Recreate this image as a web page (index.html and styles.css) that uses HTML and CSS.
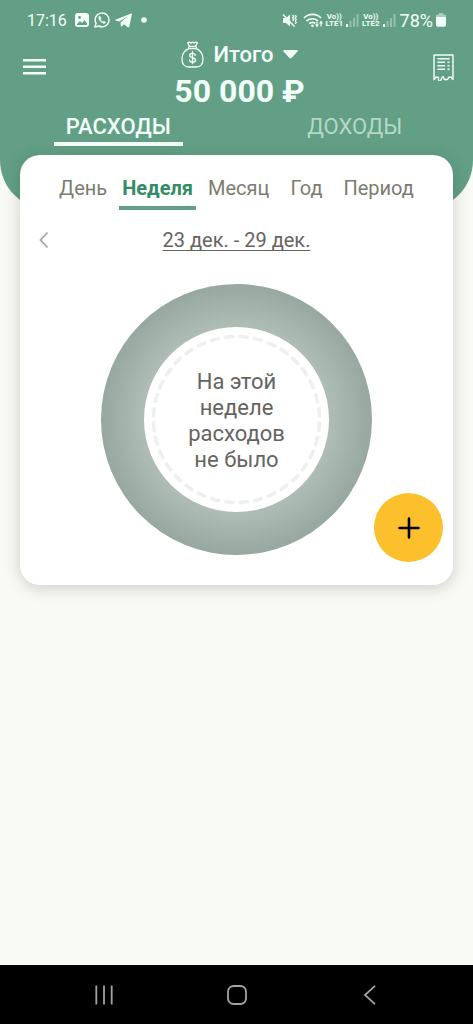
FILE: index.html
```html
<!DOCTYPE html>
<html lang="ru">
<head>
<meta charset="utf-8">
<meta name="viewport" content="width=device-width, initial-scale=1">
<title>Расходы</title>
<link rel="stylesheet" href="styles.css">
</head>
<body>
<header class="hero">
  <div class="status">
    <div class="status-left">
      <span class="clock">17:16</span>
      <svg width="14" height="14" viewBox="0 0 14 14"><rect width="14" height="14" rx="3" fill="currentColor"/><circle cx="4.500" cy="4.500" r="1.400" fill="#629f85"/><path d="M2 11l3-3 2 2 2.500-3L12 10.500V12H2z" fill="#629f85"/></svg>
      <svg width="16" height="16" viewBox="0 0 16 16" fill="none" stroke="currentColor"><path d="M1 15l1-3.800A6.900 6.900 0 1 1 4.800 14z" stroke-width="1.500" stroke-linejoin="round"/><path d="M5.200 4.200c-1.600 1.600.3 4.300 2 5.800 1.600 1.400 3.600 2.100 4.600.6l-1.900-1.500-1 .9C7.700 9.500 6.800 8.500 6.300 7.500l.8-1-.8-2.100z" fill="currentColor" stroke-width=".4"/></svg>
      <svg width="17" height="15" viewBox="0 0 17 15" fill="currentColor"><path d="M.4 6.800L16 .5c.6-.2 1 .1.900.8l-2.600 12.300c-.2.9-.8 1-1.500.6L9 11.300l-2 2c-.6.500-1 .4-1.100-.4l-.3-3.300L12.700 3.300 4.300 8.500.5 7.600c-.6-.2-.6-.6-.1-.8z"/></svg>
      <svg class="dot" width="6" height="6" viewBox="0 0 6 6"><circle cx="3" cy="3" r="2.800" fill="currentColor"/></svg>
    </div>
    <div class="status-right">
      <svg width="15" height="15" viewBox="0 0 15 15" fill="none" stroke="currentColor"><path d="M1 5h3l4-3.500v12L4 10H1z" fill="currentColor" stroke="none"/><path d="M1 1.500l11.500 12" stroke-width="1.500"/><path d="M10.500 2l1.200 1.500-1.200 1.500 1.200 1.500-1 1.500M13.200 2l1 1.500-1 1.500 1 1.500-1 1.500 1 1.500-1 1.500" stroke-width="1.300"/></svg>
      <svg class="wifi" width="20" height="15" viewBox="0 0 20 15" fill="none" stroke="currentColor" stroke-width="1.700"><path d="M1 5a12 12 0 0 1 17 0M3.500 8a8.500 8.500 0 0 1 11.500 0M6.200 10.700a5 5 0 0 1 6-.5"/><circle cx="9.500" cy="12.800" r="1.300" fill="currentColor" stroke="none"/><path d="M14 8.500v4M18 13.500v-4" stroke-width="1.200"/><path d="M12 11.500h4l-2 3zM16 10.500h4l-2-3z" fill="currentColor" stroke="none"/></svg>
      <span class="lte"><span>Vo))</span><span>LTE1</span></span>
      <svg class="bars" width="13" height="13" viewBox="0 0 13 13" fill="currentColor"><path d="M0 10h2v3H0z"/><path d="M3.500 7h2v6h-2zM7 4h2v9H7zM10.500 0h2v13h-2z" opacity=".35"/></svg>
      <span class="lte"><span>Vo))</span><span>LTE2</span></span>
      <svg class="bars" width="13" height="13" viewBox="0 0 13 13" fill="currentColor"><path d="M0 10h2v3H0z"/><path d="M3.500 7h2v6h-2zM7 4h2v9H7zM10.500 0h2v13h-2z" opacity=".35"/></svg>
      <span class="battery">78%</span>
      <svg width="10" height="14" viewBox="0 0 10 14" fill="currentColor"><path d="M3 0h4v1.500h1.500A1.500 1.500 0 0 1 10 3v3H0V3a1.500 1.500 0 0 1 1.500-1.500H3z" opacity=".5"/><path d="M0 4h10v8a1.800 1.800 0 0 1-1.800 1.800H1.800A1.800 1.800 0 0 1 0 12z"/></svg>
    </div>
  </div>

  <div class="topbar">
    <button class="icon-button" type="button" aria-label="Меню">
      <svg width="23" height="16" viewBox="0 0 23 16" fill="currentColor"><path d="M0 0h23v2.400H0zM0 6.600h23V9H0zM0 13h23v2.400H0z"/></svg>
    </button>
    <div class="account">
      <button class="account-name" type="button">
        <svg width="23" height="27" viewBox="0 0 23 27" fill="none" stroke="currentColor" stroke-width="1.300" stroke-linecap="round" stroke-linejoin="round"><path d="M8.300 7.300C4 9 1 13 1 18c0 5 2.500 8 7 8h7c4.500 0 7-3 7-8 0-5-3-9-7.300-10.700"/><path d="M8.500 5.300L6.700 2c1.500-1.500 2.500-.8 3.300.2C10.800.8 12.300.8 13 2.200c.8-1 2-1.700 3.400-.2l-1.900 3.300"/><rect x="7.500" y="5.300" width="8" height="2.200" rx="1.100"/><path d="M14.300 14.300c-.2-1.400-1.200-2-2.800-2-1.700 0-2.800.8-2.800 2.200 0 3 5.800 1.500 5.800 4.500 0 1.500-1.200 2.200-3 2.200-1.700 0-2.900-.8-3-2.200M11.500 10.700v12"/></svg>
        <span>Итого</span>
        <svg width="15" height="9" viewBox="0 0 15 9" fill="currentColor"><path d="M1.200 0h12.600q1.500.2.700 1.400L8.500 8q-1 .9-2 0L.5 1.400Q-.3.200 1.200 0z"/></svg>
      </button>
      <div class="balance">50 000 ₽</div>
    </div>
    <button class="icon-button" type="button" aria-label="Список операций">
      <svg width="21" height="27" viewBox="0 0 21 27" fill="none" stroke="currentColor" stroke-width="1.400"><path d="M1 1h19v24.500q-1.600-.5-1.600-2.200h-2.600q-.7 2.400-2.800 2.400T10.500 23.300 8 25.700t-2.800-2.400H2.600Q2.600 25 1 25.500z" stroke-linejoin="round"/><path d="M4.500 4.700h12M4.500 8.200h7.500M14.500 8.200h2M4.500 11.700h7.500M14.500 11.700h2M4.500 15.200h7.500M14.500 15.200h2"/></svg>
    </button>
  </div>

  <nav class="kinds" aria-label="Тип операций">
    <a class="kind kind-active" href="#expenses" aria-current="page">РАСХОДЫ</a>
    <a class="kind" href="#income">ДОХОДЫ</a>
  </nav>
</header>

<main class="content">
  <section class="card">
    <nav class="periods" aria-label="Период">
      <a class="period" href="#day">День</a>
      <a class="period period-active" href="#week" aria-current="true">Неделя</a>
      <a class="period" href="#month">Месяц</a>
      <a class="period period-short" href="#year">Год</a>
      <a class="period" href="#range">Период</a>
    </nav>
    <div class="dates">
      <button class="prev" type="button" aria-label="Предыдущая неделя">
        <svg width="10" height="18" viewBox="0 0 10 18" fill="none" stroke="currentColor" stroke-width="1.700"><path d="M8.500 1.500L1.500 9l7 7.500"/></svg>
      </button>
      <a class="date-range" href="#range">23 дек. - 29 дек.</a>
    </div>
    <div class="donut">
      <svg class="ring" viewBox="0 0 271 271">
        <defs>
          <radialGradient id="ring-fill"><stop offset=".65" stop-color="#b1bfb7"/><stop offset="1" stop-color="#97a8a1"/></radialGradient>
        </defs>
        <circle cx="135.500" cy="135.500" r="135.500" fill="url(#ring-fill)"/>
        <circle cx="135.500" cy="135.500" r="92.500" fill="#fff"/>
        <circle cx="135.500" cy="135.500" r="83" fill="none" stroke="#edf0ef" stroke-width="3.500" pathLength="360" stroke-dasharray="7 3" stroke-dashoffset="-1.500"/>
      </svg>
      <p class="empty">На этой<br>неделе<br>расходов<br>не было</p>
    </div>
    <button class="add" type="button" aria-label="Добавить">
      <svg width="22" height="22" viewBox="0 0 22 22" stroke="currentColor" stroke-width="2.600" stroke-linecap="round"><path d="M11 1.500v19M1.500 11h19"/></svg>
    </button>
  </section>
</main>

<footer class="system-nav">
  <button class="system-button" type="button" aria-label="Недавние">
    <svg width="20" height="20" viewBox="0 0 20 20" stroke="currentColor" stroke-width="1.800"><path d="M2.300 .5v19M10 .5v19M17.700 .5v19"/></svg>
  </button>
  <button class="system-button" type="button" aria-label="Домой">
    <svg width="20" height="20" viewBox="0 0 20 20" fill="none" stroke="currentColor" stroke-width="1.800"><rect x="1" y="1" width="18" height="18" rx="5.500"/></svg>
  </button>
  <button class="system-button" type="button" aria-label="Назад">
    <svg width="20" height="20" viewBox="0 0 20 20" fill="none" stroke="currentColor" stroke-width="1.800"><path d="M15 .8L5 10l10 9.200"/></svg>
  </button>
</footer>
</body>
</html>
```

FILE: styles.css
```css
* {
  box-sizing: border-box;
}

body {
  margin: 0;
  min-height: 100vh;
  display: flex;
  flex-direction: column;
  background: #f9faf4;
  color: #66645f;
  font-family: Roboto, "Noto Sans", sans-serif;
}

button {
  margin: 0;
  padding: 0;
  border: 0;
  background: none;
  color: inherit;
  font: inherit;
  cursor: pointer;
}

a {
  color: inherit;
  text-decoration: none;
}

svg {
  display: block;
  flex: none;
}

.hero {
  padding-bottom: 64px;
  border-radius: 0 0 50px 50px;
  background: #629f85;
  color: #f3fff9;
}

.status {
  display: flex;
  justify-content: space-between;
  height: 40px;
  padding: 0 27px;
}

.status-left,
.status-right {
  display: flex;
  align-items: center;
}

.status-left {
  gap: 5px;
}

.status-right {
  gap: 3px;
}

.clock {
  margin-right: 3px;
  font-size: 16px;
}

.dot {
  margin-left: 4px;
}

.wifi {
  margin-left: 3px;
}

.lte {
  display: flex;
  flex-direction: column;
  align-items: center;
  font-size: 8px;
  font-weight: 700;
  line-height: 7px;
}

.battery {
  margin-left: 1px;
  font-size: 18px;
}

.topbar {
  display: flex;
  justify-content: space-between;
  padding: 0 19px 0 23px;
}

.icon-button {
  display: flex;
  align-items: center;
  height: 54px;
}

.account {
  display: flex;
  flex-direction: column;
  align-items: center;
}

.account-name {
  display: flex;
  align-items: center;
  gap: 9px;
  height: 28px;
  font-size: 22px;
  font-weight: 500;
}

.balance {
  font-size: 32px;
  font-weight: 700;
  line-height: 46px;
}

.kinds {
  display: grid;
  grid-template-columns: 1fr 1fr;
  justify-items: center;
}

.kind {
  height: 32px;
  padding: 0 12px;
  border-bottom: 4px solid transparent;
  color: #b3d9c4;
  font-size: 22px;
  line-height: 26px;
}

.kind-active {
  border-color: #f3fff9;
  color: #f3fff9;
  font-weight: 500;
}

.content {
  flex: 1;
  margin-top: -55px;
  padding: 0 20px;
}

.card {
  position: relative;
  padding-bottom: 30px;
  border-radius: 20px;
  background: #fff;
  box-shadow: 0 3px 16px rgba(40, 50, 40, 0.22);
}

.periods {
  display: flex;
  justify-content: center;
  gap: 9px;
  padding-top: 18px;
  color: #7d7b6f;
  font-size: 20px;
  line-height: 30px;
}

.period {
  height: 37px;
  padding: 0 3px;
  border-bottom: 4px solid transparent;
}

.period-active {
  border-color: #629f85;
  color: #348b67;
  font-weight: 700;
}

.period-short {
  margin: 0 6px;
}

.dates {
  display: grid;
  grid-template-columns: 30px 1fr 30px;
  align-items: center;
  justify-items: center;
  height: 60px;
  padding: 0 9px;
}

.prev {
  padding: 4px;
  color: #9aa8a2;
}

.date-range {
  font-size: 20px;
  text-decoration: underline;
  text-decoration-thickness: 1px;
  text-underline-offset: 3px;
}

.donut {
  display: grid;
  place-items: center;
  margin-top: 14px;
}

.ring,
.empty {
  grid-area: 1 / 1;
}

.ring {
  width: 271px;
}

.empty {
  z-index: 1;
  margin: 2px 0 0;
  font-size: 22px;
  line-height: 26px;
  text-align: center;
}

.add {
  position: absolute;
  right: 10px;
  bottom: 23px;
  display: grid;
  place-items: center;
  width: 69px;
  height: 69px;
  border-radius: 50%;
  background: #fdc02d;
  color: #000;
}

.system-nav {
  display: flex;
  justify-content: space-around;
  align-items: center;
  height: 59px;
  padding: 0 37px;
  background: #000;
  color: #a3a3a3;
}

.system-button {
  padding: 10px;
}
```
